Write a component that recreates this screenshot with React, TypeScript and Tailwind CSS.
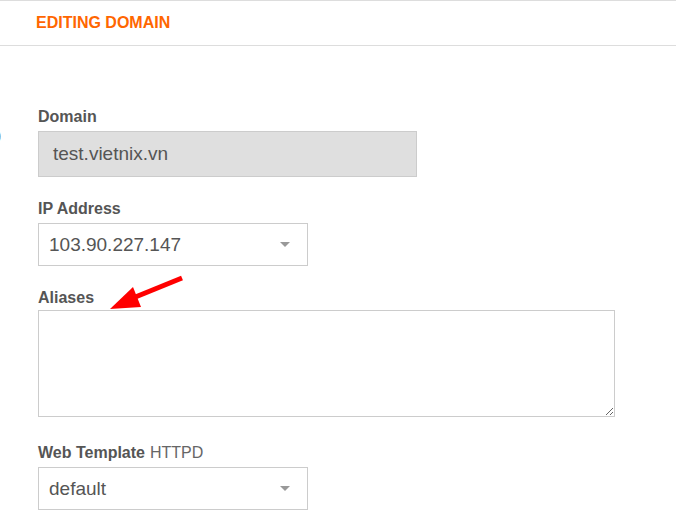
import React from 'react';

const font = { fontFamily: '"Liberation Sans", Arial, sans-serif' };

function Caret() {
  return (
    <svg width="10" height="6" viewBox="0 0 10 6" className="shrink-0">
      <path d="M0 0 L10 0 L5 5 Z" fill="#999" />
    </svg>
  );
}

function Select({ value }: { value: string }) {
  return (
    <div className="flex h-[43px] w-[270px] items-center justify-between border border-[#ccc] bg-white pl-[10px] pr-[17px]">
      <span className="pt-[2px] text-[19px] text-[#555]">{value}</span>
      <Caret />
    </div>
  );
}

export default function App() {
  return (
    <div className="relative min-h-[513px] w-full overflow-hidden bg-white" style={font}>
      {/* header */}
      <div className="flex h-[46px] items-center border-y border-[#ddd] pl-[36px]">
        <span className="text-[16px] font-bold uppercase text-[#ff6600]">Editing Domain</span>
      </div>

      {/* cut-off glyph from the left column */}
      <span className="absolute left-[-4px] top-[124px] text-[16px] text-[#555]">)</span>

      <div className="flex flex-col pl-[38px] pt-[61px]">
        <label className="text-[16px] font-bold leading-[20px] text-[#555]">Domain</label>
        <div className="mt-[4px] flex h-[46px] w-[379px] items-center border border-[#ccc] bg-[#dfdfdf] pl-[14px]">
          <span className="text-[19px] text-[#555]">test.vietnix.vn</span>
        </div>

        <label className="mt-[22px] text-[16px] font-bold leading-[20px] text-[#555]">IP Address</label>
        <div className="mt-[4px]">
          <Select value="103.90.227.147" />
        </div>

        <label className="mt-[22px] text-[16px] font-bold leading-[20px] text-[#555]">Aliases</label>
        <textarea className="mt-[2px] block h-[107px] w-[577px] border border-[#ccc] bg-white outline-none" />

        <label className="mt-[26px] text-[16px] leading-[20px] text-[#555]">
          <span className="font-bold">Web Template</span>
          <span className="ml-[5px] text-[#666]">HTTPD</span>
        </label>
        <div className="mt-[4px]">
          <Select value="default" />
        </div>
      </div>

      {/* red annotation arrow */}
      <svg className="pointer-events-none absolute left-0 top-0" width="676" height="513">
        <line x1="182" y1="278" x2="128" y2="300" stroke="#ff0000" strokeWidth="5" />
        <path d="M110 309 L133 287 L141 307 Z" fill="#ff0000" />
      </svg>
    </div>
  );
}
